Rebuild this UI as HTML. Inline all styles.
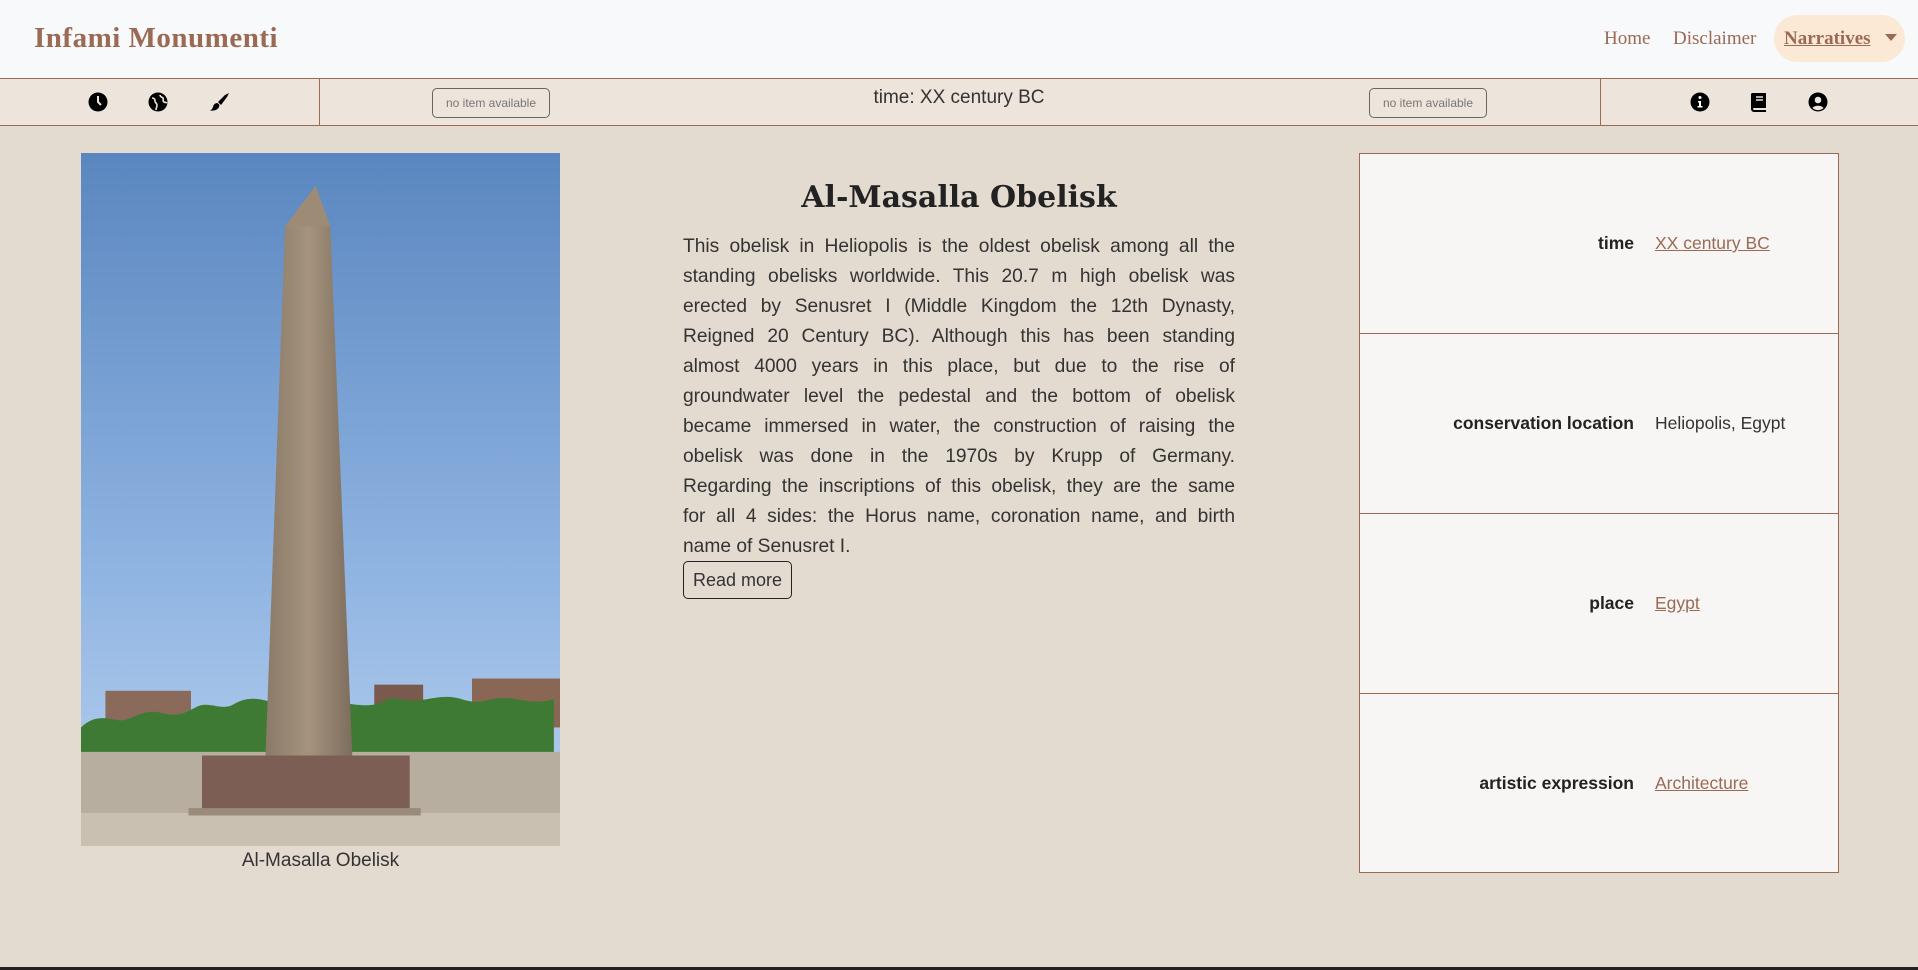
<!DOCTYPE html>
<html><head><meta charset="utf-8">
<style>
*{box-sizing:border-box;margin:0;padding:0}
html,body{width:1918px;height:970px;overflow:hidden;background:#e4dbd0;font-family:"Liberation Sans",sans-serif;color:#212529}
.hdr{position:absolute;left:0;top:0;width:1918px;height:78px;background:#f8f9fa}
.brand{position:absolute;left:34px;top:22px;font-family:"Liberation Serif",serif;font-size:29px;font-weight:bold;color:#9a6a55;letter-spacing:0.5px}
.nav{position:absolute;top:28px;font-family:"Liberation Serif",serif;font-size:19px;color:#9a6a55}
.pill{position:absolute;left:1774px;top:15px;width:131px;height:47px;border-radius:24px;background:#fbe9d6}
.pill span{position:absolute;left:10px;top:13px;font-family:"Liberation Serif",serif;font-size:19px;font-weight:bold;color:#9a6a55;text-decoration:underline}
.pill i{position:absolute;left:111px;top:19px;border-left:6px solid transparent;border-right:6px solid transparent;border-top:7px solid #9a6a55}
.bar{position:absolute;left:0;top:78px;width:1918px;height:48px;background:#ede4dc;border-top:1px solid #9a6a55;border-bottom:1px solid #9a6a55}
.div{position:absolute;top:0;width:1px;height:46px;background:#9a6a55}
.btn{position:absolute;top:9px;width:118px;height:30px;border:1px solid #666;border-radius:5px;font-size:12px;color:#777;text-align:center;line-height:28px}
.ic{position:absolute;top:13px;width:20px;height:20px}
.time{position:absolute;left:0;width:1918px;top:8px;text-align:center;font-size:19px;color:#333}
.img{position:absolute;left:81px;top:153px;width:479px;height:693px}
.cap{position:absolute;left:81px;width:479px;top:850px;text-align:center;font-size:19px;color:#333}
h1{position:absolute;left:683px;width:552px;top:180px;text-align:center;font-family:"DejaVu Serif",serif;font-size:30px;font-weight:bold;color:#222}
.p{position:absolute;left:683px;width:552px;top:232px;font-size:19.2px;line-height:30px;color:#333}
.p div{text-align:justify;text-align-last:justify;white-space:nowrap}
.p div.l{text-align-last:left}
.rm{position:absolute;left:683px;top:561px;width:109px;height:38px;border:1px solid #222;border-radius:5px;font-size:18px;text-align:center;line-height:36px;color:#333}
.tbl{position:absolute;left:1359px;top:153px;width:480px;height:720px;background:#f8f6f4;border:1px solid #9a6a55}
.row{position:absolute;left:0;width:478px;height:180px;border-bottom:1px solid #9a6a55}
.row b{position:absolute;right:204px;top:79px;font-size:17.5px;color:#222}
.row span{position:absolute;left:295px;top:79px;font-size:17.5px;color:#333}
.row a{color:#9a6a55;text-decoration:underline}
.bot{position:absolute;left:0;top:967px;width:1918px;height:3px;background:#222}
</style></head><body>
<div class="hdr">
<div class="brand">Infami Monumenti</div>
<div class="nav" style="left:1604px">Home</div>
<div class="nav" style="left:1673px">Disclaimer</div>
<div class="pill"><span>Narratives </span><i></i></div>
</div>
<div class="bar">
<div class="div" style="left:319px"></div>
<div class="div" style="left:1600px"></div>
<svg class="ic" style="left:88px" viewBox="0 0 20 20"><circle cx="10" cy="10" r="9.5" fill="#000"/><path d="M10 4v6l3 3" stroke="#ede4dc" stroke-width="2" fill="none"/></svg>
<svg class="ic" style="left:148px" viewBox="0 0 20 20"><circle cx="10" cy="10" r="9.5" fill="#000"/><path d="M4 6c2 0 3 1 3 3s2 2 2 4-1 3-1 5M12 3c0 2 2 2 3 3s-1 3 1 4 2 0 3 1" stroke="#ede4dc" stroke-width="1.6" fill="none"/></svg>
<svg class="ic" style="left:210px" viewBox="0 0 20 20"><path d="M19 1L17 5 11 13 8 10 15 3z" fill="#000"/><path d="M7.5 11c-3 0-4 2-4.5 4-.5 2-2 3-3 3.5 3 .5 6 0 8-2 1.5-1.5 1.5-3 1.2-4z" fill="#000"/></svg>
<div class="btn" style="left:432px">no item available</div>
<div class="time">time: XX century BC</div>
<div class="btn" style="left:1369px">no item available</div>
<svg class="ic" style="left:1690px" viewBox="0 0 20 20"><circle cx="10" cy="10" r="9.5" fill="#000"/><circle cx="10" cy="5.5" r="1.5" fill="#fff"/><path d="M8 9h3v5h1.5v1.5h-5V14H9v-3.5H8z" fill="#fff"/></svg>
<svg class="ic" style="left:1749px" viewBox="0 0 20 20"><path d="M3 1h14v15H5a1 1 0 000 2h12v2H5a3 3 0 01-3-3V2z" fill="#000"/><path d="M7 5h7M7 8h7" stroke="#ede4dc" stroke-width="1.4"/></svg>
<svg class="ic" style="left:1808px" viewBox="0 0 20 20"><circle cx="10" cy="10" r="9.5" fill="#000"/><circle cx="10" cy="8" r="3.3" fill="#ede4dc"/><path d="M4.5 16c1.5-3 9.5-3 11 0a8 8 0 01-11 0z" fill="#ede4dc"/></svg>
</div>

<svg class="img" viewBox="0 0 392 567" preserveAspectRatio="none">
<defs><linearGradient id="sky" x1="0" y1="0" x2="0" y2="1"><stop offset="0" stop-color="#5a86bf"/><stop offset="0.6" stop-color="#8fb4e2"/><stop offset="1" stop-color="#b9d1ee"/></linearGradient>
<linearGradient id="ob" x1="0" y1="0" x2="1" y2="0"><stop offset="0" stop-color="#8a7a68"/><stop offset="0.5" stop-color="#a5937d"/><stop offset="1" stop-color="#7d6d5d"/></linearGradient></defs>
<rect width="392" height="567" fill="url(#sky)"/>
<rect x="20" y="440" width="70" height="30" fill="#8a6a5a"/>
<rect x="240" y="435" width="40" height="35" fill="#7a5a4c"/>
<rect x="320" y="430" width="72" height="40" fill="#8a6655"/>
<path d="M0 470c10-10 20-8 30-6s20-10 35-6 20 0 30-5 20 4 30-2 20-6 35 0 30-4 62 0 20-8 40-4 30-6 50 0 20-4 45 0 25 0 30 0V495H0z" fill="#3f7a35"/>
<rect x="0" y="490" width="392" height="77" fill="#b7aea0"/>
<rect x="0" y="540" width="392" height="27" fill="#c9c0b2"/>
<path d="M99 493h170v47H99z" fill="#7d5e55"/>
<path d="M88 536h190v6H88z" fill="#9a8a7a"/>
<path d="M192 27L204 60 222 493H151L167 60z" fill="url(#ob)"/>
<path d="M192 27L204 60H167z" fill="#9d8b75"/>
</svg>
<div class="cap">Al-Masalla Obelisk</div>

<h1>Al-Masalla Obelisk</h1>
<div class="p">
<div>This obelisk in Heliopolis is the oldest obelisk among all the</div>
<div>standing obelisks worldwide. This 20.7 m high obelisk was</div>
<div>erected by Senusret I (Middle Kingdom the 12th Dynasty,</div>
<div>Reigned 20 Century BC). Although this has been standing</div>
<div>almost 4000 years in this place, but due to the rise of</div>
<div>groundwater level the pedestal and the bottom of obelisk</div>
<div>became immersed in water, the construction of raising the</div>
<div>obelisk was done in the 1970s by Krupp of Germany.</div>
<div>Regarding the inscriptions of this obelisk, they are the same</div>
<div>for all 4 sides: the Horus name, coronation name, and birth</div>
<div class="l">name of Senusret I.</div>
</div>
<div class="rm">Read more</div>

<div class="tbl">
<div class="row" style="top:0"><b>time</b><span><a>XX century BC</a></span></div>
<div class="row" style="top:180px"><b>conservation location</b><span>Heliopolis, Egypt</span></div>
<div class="row" style="top:360px"><b>place</b><span><a>Egypt</a></span></div>
<div class="row" style="top:540px;border-bottom:none"><b>artistic expression</b><span><a>Architecture</a></span></div>
</div>
<div class="bot"></div>
</body></html>
